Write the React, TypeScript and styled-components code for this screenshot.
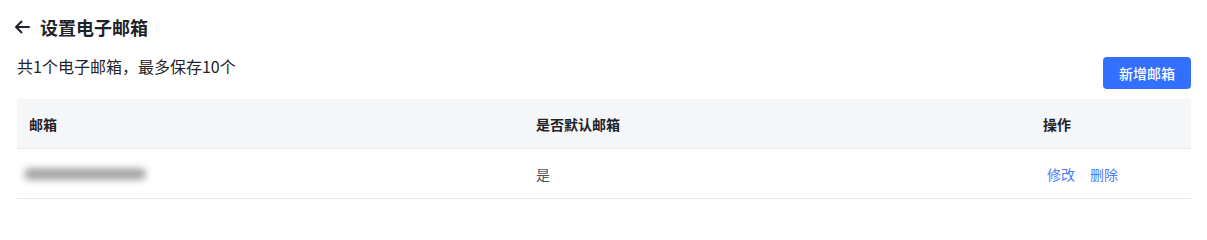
import React from 'react';
import styled, { createGlobalStyle } from 'styled-components';

const GlobalStyle = createGlobalStyle`
  html, body {
    margin: 0;
    padding: 0;
    background: #fff;
  }
  body {
    font-family: "Noto Sans CJK SC", "Liberation Sans", sans-serif;
    color: #1f2329;
  }
`;

const Page = styled.div`
  padding: 14px 16px 0 17px;
`;

const TitleRow = styled.div`
  display: flex;
  align-items: center;
  gap: 9px;
  height: 26px;
  margin-left: -4px;
`;

const BackButton = styled.button`
  display: flex;
  align-items: center;
  justify-content: center;
  width: 18px;
  height: 18px;
  padding: 0;
  border: none;
  background: none;
  color: #1f2329;
  cursor: pointer;
`;

const Title = styled.h2`
  margin: 0;
  font-size: 18px;
  line-height: 26px;
  font-weight: 700;
  color: #1f2329;
`;

const Toolbar = styled.div`
  display: flex;
  justify-content: space-between;
  align-items: flex-start;
  margin-top: 17px;
`;

const Summary = styled.p`
  margin: 0;
  font-size: 16px;
  line-height: 18px;
  color: #1f2329;
`;

const PrimaryButton = styled.button`
  width: 88px;
  height: 32px;
  border: none;
  border-radius: 4px;
  background: #3370ff;
  color: #fff;
  font-family: inherit;
  font-size: 14px;
  font-weight: 500;
  cursor: pointer;
`;

const Table = styled.div`
  margin-top: 10px;
  display: grid;
  grid-template-columns: 507px 507px 160px;
`;

const HeadCell = styled.div`
  height: 49px;
  display: flex;
  align-items: center;
  padding: 0 12px;
  background: #f5f6f8;
  border-bottom: 1px solid #e8eaee;
  font-size: 14px;
  font-weight: 700;
  color: #1f2329;
`;

const Cell = styled.div`
  height: 49px;
  display: flex;
  align-items: center;
  gap: 15px;
  padding: 0 12px;
  border-bottom: 1px solid #e8eaee;
  font-size: 14px;
  color: #4e5358;
`;

const Masked = styled.div<{ $width: number }>`
  width: ${(p) => p.$width}px;
  height: 12px;
  margin-left: -5px;
  margin-top: 1px;
  border-radius: 6px;
  background: #a6a6a6;
  filter: blur(3.5px);
`;

const LinkButton = styled.button`
  padding: 0;
  margin-left: 4px;
  border: none;
  background: none;
  font-family: inherit;
  font-size: 14px;
  color: #4d7cfe;
  cursor: pointer;
  & + & {
    margin-left: 0;
  }
`;

const emails = [{ id: 1, width: 122, isDefault: true }];

function App() {
  return (
    <>
      <GlobalStyle />
      <Page>
        <TitleRow>
          <BackButton aria-label="返回">
            <svg width="16" height="16" viewBox="0 0 16 16" fill="none">
              <path
                d="M15 8H2M7.5 2.5 2 8l5.5 5.5"
                stroke="currentColor"
                strokeWidth="2"
                strokeLinecap="round"
                strokeLinejoin="round"
              />
            </svg>
          </BackButton>
          <Title>设置电子邮箱</Title>
        </TitleRow>
        <Toolbar>
          <Summary>共1个电子邮箱，最多保存10个</Summary>
          <PrimaryButton>新增邮箱</PrimaryButton>
        </Toolbar>
        <Table>
          <HeadCell>邮箱</HeadCell>
          <HeadCell>是否默认邮箱</HeadCell>
          <HeadCell>操作</HeadCell>
          {emails.map((row) => (
            <React.Fragment key={row.id}>
              <Cell>
                <Masked $width={row.width} />
              </Cell>
              <Cell>{row.isDefault ? '是' : '否'}</Cell>
              <Cell>
                <LinkButton>修改</LinkButton>
                <LinkButton>删除</LinkButton>
              </Cell>
            </React.Fragment>
          ))}
        </Table>
      </Page>
    </>
  );
}

export default App;
